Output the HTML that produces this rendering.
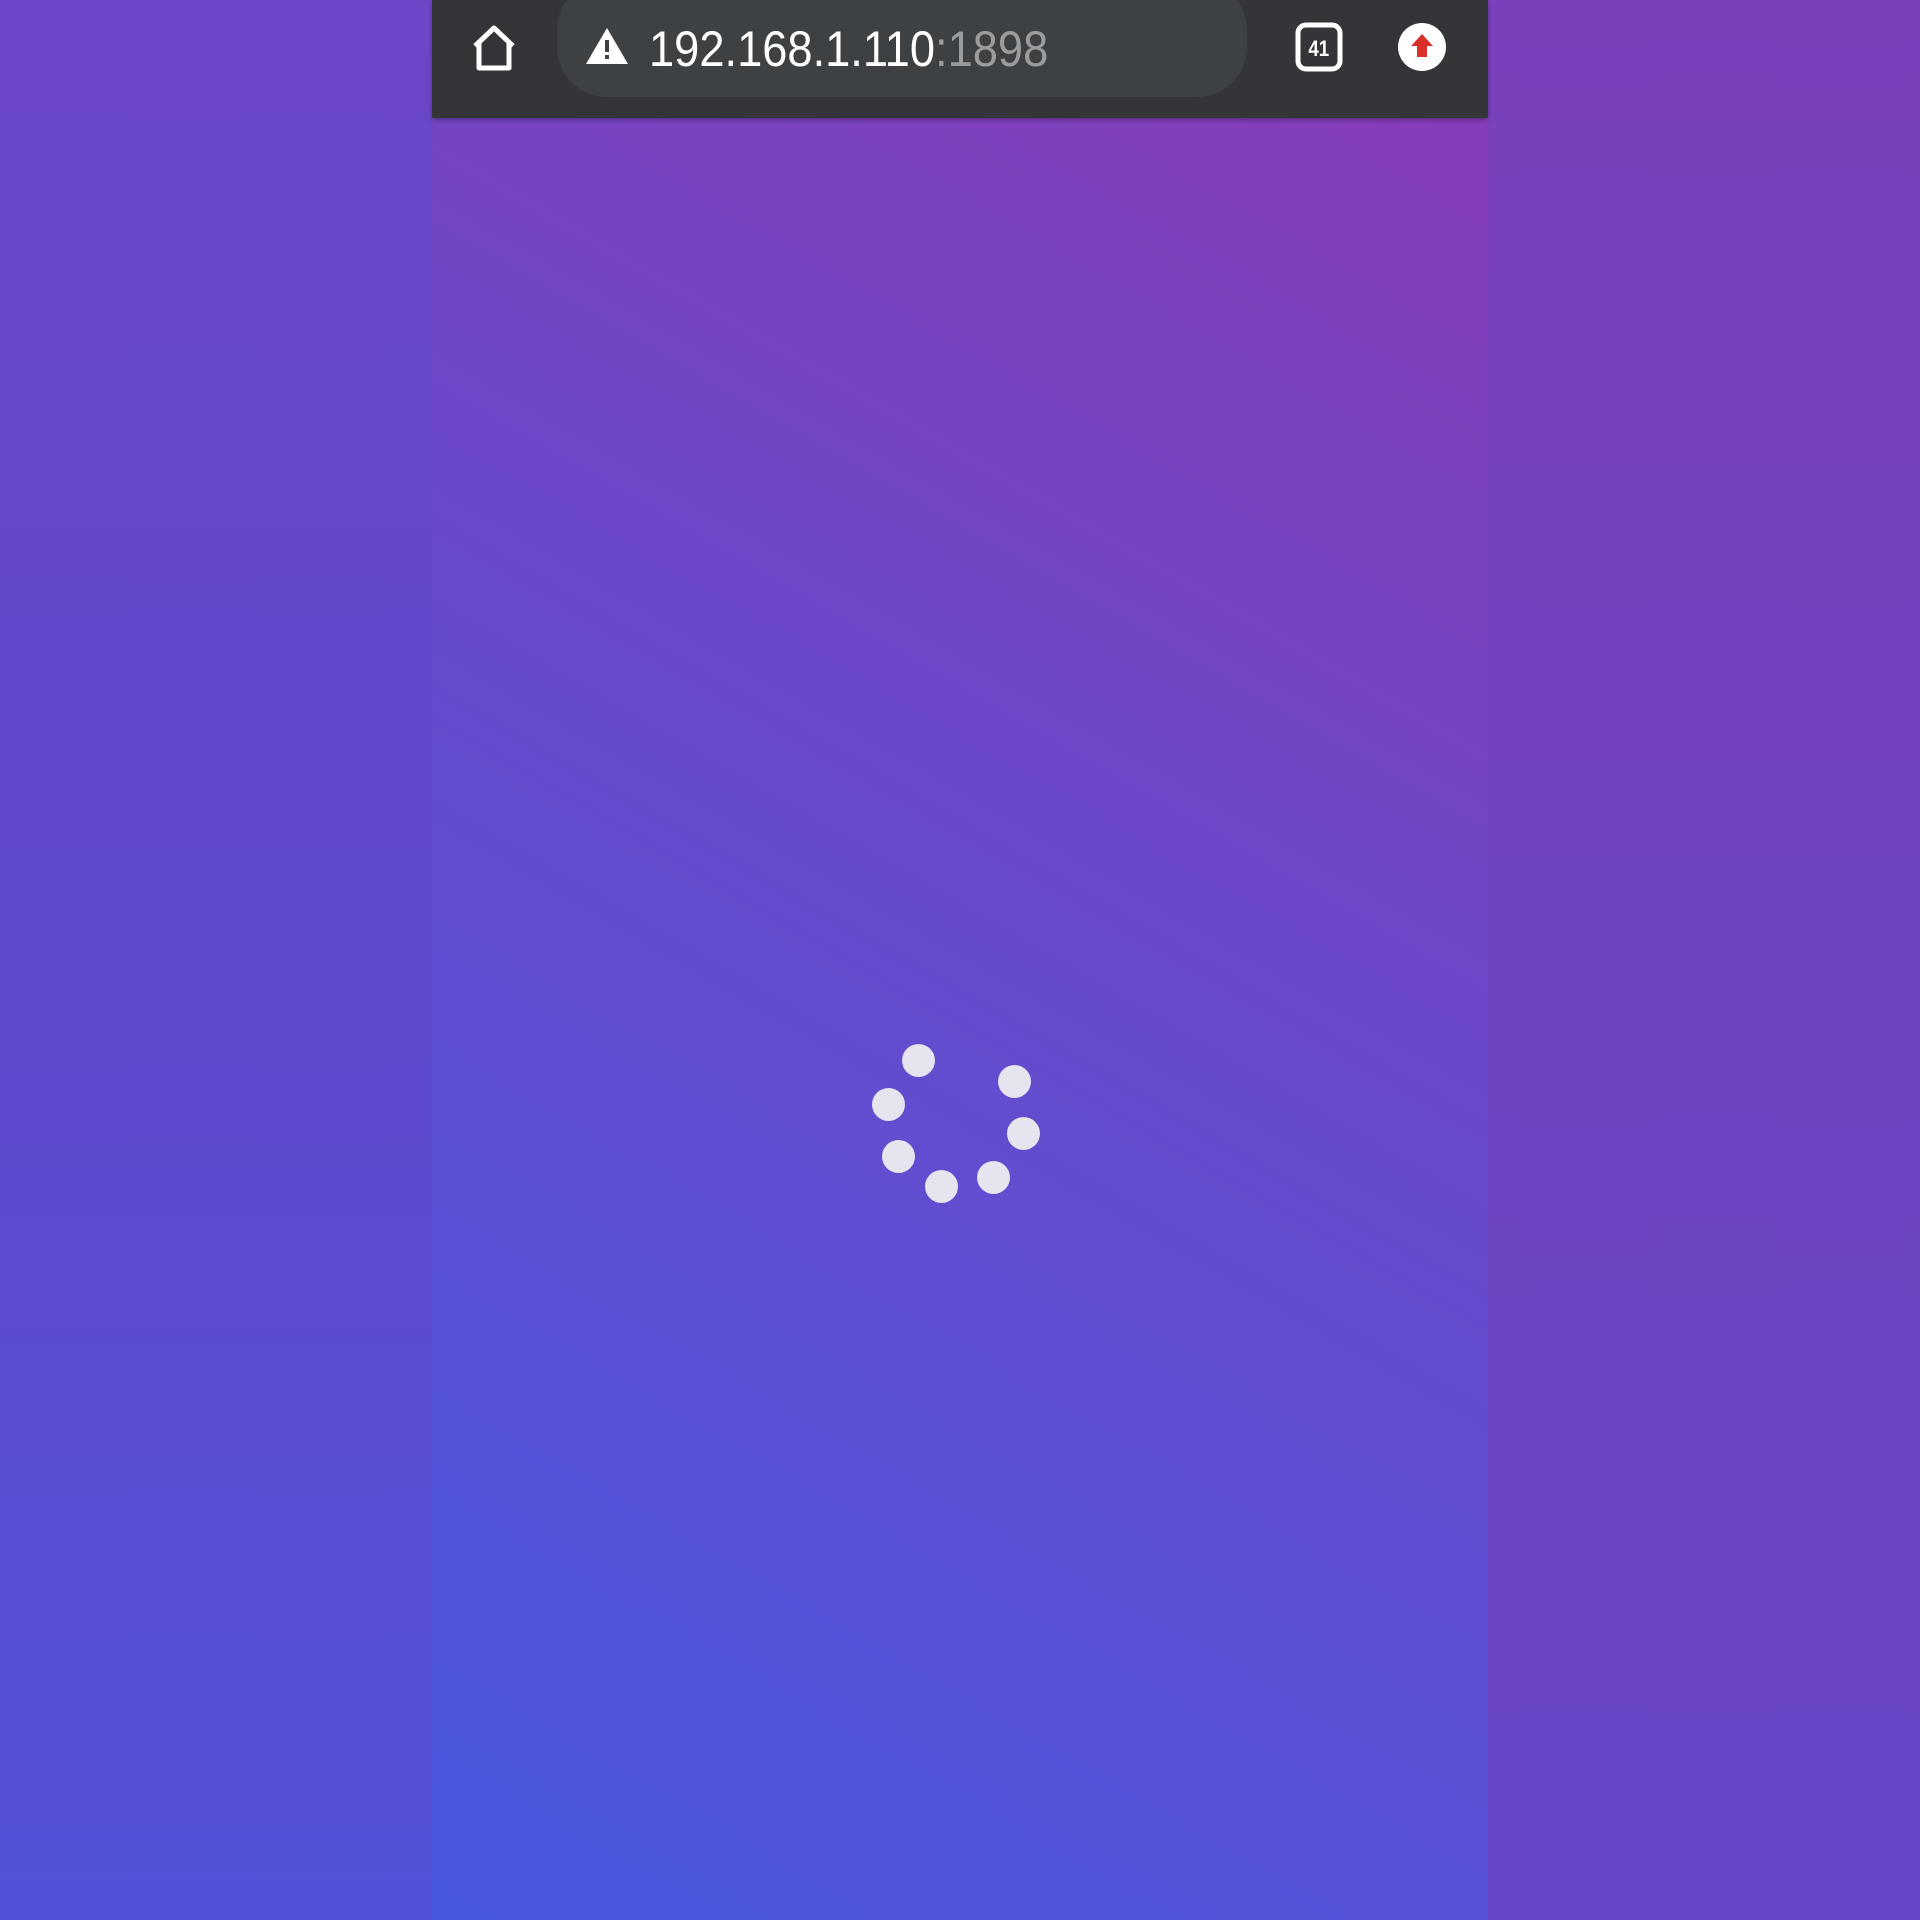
<!DOCTYPE html>
<html><head><meta charset="utf-8"><style>
html,body{margin:0;padding:0;width:1920px;height:1920px;overflow:hidden;}
body{position:relative;font-family:"Liberation Sans",sans-serif;background:#6648c8;}
.lside{position:absolute;left:0;top:0;width:432px;height:1920px;background:linear-gradient(180deg,#6c47c8 0%,#6049cc 50%,#5252d8 100%);}
.rside{position:absolute;left:1488px;top:0;width:432px;height:1920px;background:linear-gradient(180deg,#7b3fbb 0%,#6e44c2 50%,#6846c6 100%);}
.main{position:absolute;left:432px;top:0;width:1056px;height:1920px;background:linear-gradient(210deg,#8a3bb6 0%,#6c48c8 40%,#5a50d4 70%,#4858e0 100%);}
.bar{position:absolute;left:432px;top:0;width:1056px;height:118px;background:#333538;box-shadow:0 2px 4px rgba(0,0,0,0.3);}
.pill{position:absolute;left:125px;top:-20px;width:690px;height:117px;border-radius:50px;background:#3e4144;}
.url{position:absolute;left:217px;top:20px;font-size:50px;color:#fff;white-space:nowrap;transform:scaleX(0.905);transform-origin:left top;}
.url span{color:#9a9c9e;}
.dot{position:absolute;width:33px;height:33px;border-radius:50%;background:#e6e4ee;}
</style></head><body>
<div class="lside"></div><div class="rside"></div><div class="main"></div>
<div class="bar">
  <svg style="position:absolute;left:37px;top:24px" width="50" height="48" viewBox="0 0 50 48"><path d="M6 22 L25 4 L44 22 M10 19 V44 H40 V19" fill="none" stroke="#fff" stroke-width="5" stroke-linejoin="round"/></svg>
  <div class="pill"></div>
  <svg style="position:absolute;left:153px;top:27px" width="44" height="38" viewBox="0 0 44 38"><path d="M22 1 L43 37 H1 Z" fill="#fff"/><rect x="20" y="13" width="4" height="12" fill="#3e4144"/><rect x="20" y="28" width="4" height="4" fill="#3e4144"/></svg>
  <div class="url">192.168.1.110<span>:1898</span></div>
  <svg style="position:absolute;left:863px;top:22px" width="48" height="50" viewBox="0 0 48 50"><rect x="3" y="3" width="42" height="44" rx="8" fill="none" stroke="#fff" stroke-width="5"/><text x="24" y="34" font-family="Liberation Sans" font-weight="bold" font-size="22" fill="#fff" text-anchor="middle" transform="scale(0.85,1) translate(4,0)">41</text></svg>
  <svg style="position:absolute;left:966px;top:23px" width="48" height="48" viewBox="0 0 48 48"><circle cx="24" cy="24" r="24" fill="#fff"/><path d="M24 11 L35 23 H29 V34 H19 V23 H13 Z" fill="#d9302a"/></svg>
</div>
<div class="dot" style="left:902px;top:1044px"></div>
<div class="dot" style="left:998px;top:1065px"></div>
<div class="dot" style="left:1007px;top:1117px"></div>
<div class="dot" style="left:977px;top:1161px"></div>
<div class="dot" style="left:925px;top:1170px"></div>
<div class="dot" style="left:882px;top:1140px"></div>
<div class="dot" style="left:872px;top:1088px"></div>
</body></html>
